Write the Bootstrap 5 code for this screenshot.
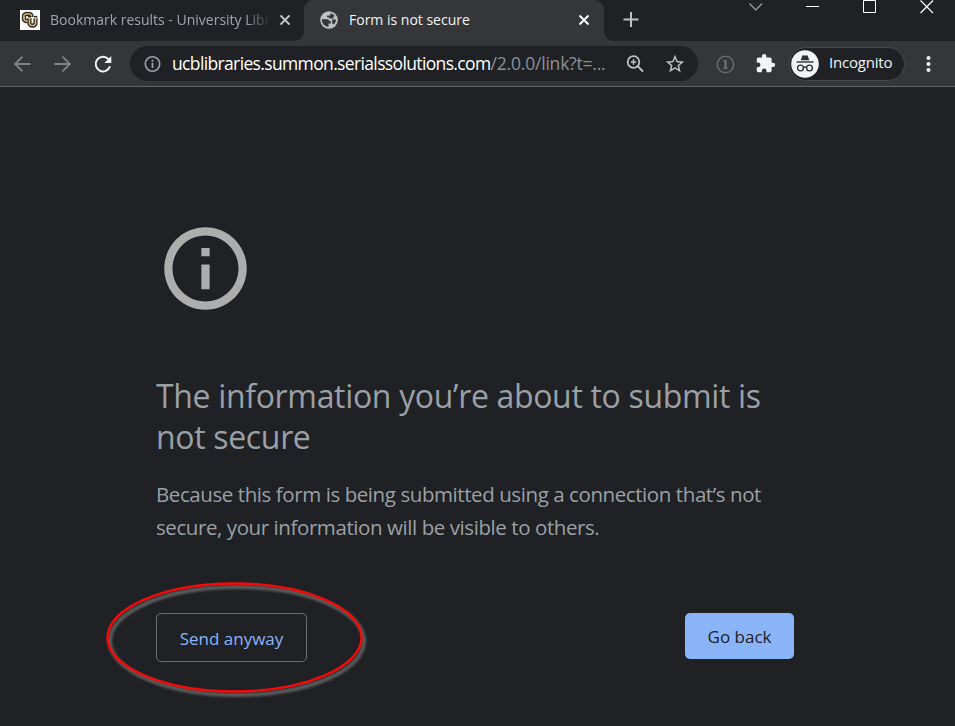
<!DOCTYPE html>
<html lang="en">
<head>
<meta charset="utf-8">
<meta name="viewport" content="width=device-width, initial-scale=1">
<title>Form is not secure</title>
<link href="https://cdn.jsdelivr.net/npm/bootstrap@5.3.0/dist/css/bootstrap.min.css" rel="stylesheet">
<style>
  body { background: #202124; color: #9aa0a6; font-family: "Open Sans", "Noto Sans", sans-serif; }
  svg { display: block; flex: none; }
  .tab-strip { height: 41px; background: #202124; }
  .tab-item { height: 41px; padding-bottom: 2px; font-size: 14px; line-height: 39px; white-space: nowrap; }
  .tab-idle { width: 304px; padding-left: 20px; color: #9fa5ab; }
  .tab-current { width: 300px; padding-left: 15px; background: #35363a; border-radius: 9px 9px 0 0; color: #f1f3f4; }
  .tab-current::before, .tab-current::after { content: ""; position: absolute; bottom: 0; width: 9px; height: 9px; }
  .tab-current::before { left: -9px; background: radial-gradient(circle at 0 0, #202124 8.5px, #35363a 9px); }
  .tab-current::after { right: -9px; background: radial-gradient(circle at 100% 0, #202124 8.5px, #35363a 9px); }
  .idle-title { width: 221px; margin-left: 10px; letter-spacing: 0; -webkit-mask-image: linear-gradient(90deg, #000 196px, transparent 221px); mask-image: linear-gradient(90deg, #000 196px, transparent 221px); }
  .current-title { width: 229px; margin-left: 10px; }
  .new-tab { margin: 9px 0 0 16px; }
  .window-controls { gap: 43px; padding-right: 21.5px; }
  .toolbar { height: 46px; background: #35363a; border-bottom: 1px solid #606164; padding-left: 13px; }
  .nav-icon { margin-left: 20px; }
  .address { width: 568px; height: 35px; background: #202124; margin-left: 17px; padding-left: 13px; }
  .url { width: 435px; margin-left: 11px; font-size: 17.5px; line-height: 35px; letter-spacing: -.2px; color: #8b9096; white-space: nowrap; }
  .url b { font-weight: 400; letter-spacing: -.64px; color: #fff; }
  .magnifier { margin-left: 18px; }
  .bookmark { margin-left: 19px; }
  .extensions { margin-left: 19px; }
  .incognito { width: 116px; height: 34px; margin-left: 13px; padding-left: 1px; background: #202124; border: 1px solid #45464a; color: #f1f3f4; font-size: 15px; }
  .incognito span { margin: -2px 0 0 10px; letter-spacing: -.2px; }
  .notice { width: 638px; margin-left: 156px; padding-top: 132px; }
  .notice-icon { margin-bottom: 57px; }
  .notice h1 { margin: 0; font-size: 32px; line-height: 41px; font-weight: 400; letter-spacing: -.33px; color: #9aa0a6; white-space: nowrap; }
  .notice p { margin: 21px 0 0; font-size: 20.5px; line-height: 33px; letter-spacing: -.42px; white-space: nowrap; }
  .actions { margin-top: 69px; }
  .btn-send { width: 151px; height: 49px; font-size: 17px; color: #8ab4f8; border: 1px solid #6b6d71; border-radius: 5px; padding: 2px 0 0; }
  .btn-back { width: 109px; height: 46px; font-size: 17px; color: #202124; background: #8ab4f8; border: 0; border-radius: 5px; padding: 1px 0 0; }
  .btn-send:hover, .btn-back:hover { background: #a3c3fa; color: #202124; }
  .marker { left: -51px; top: -32px; pointer-events: none; }
</style>
<script src="https://cdn.jsdelivr.net/npm/bootstrap@5.3.0/dist/js/bootstrap.bundle.min.js"></script>
</head>
<body class="min-vh-100">
<header>
  <div class="tab-strip d-flex">
    <div class="tab-item tab-idle d-flex align-items-center">
      <svg width="20" height="20" viewBox="0 0 20 20"><path fill="#fff" d="M0 0h20v20H0z"/><g fill="none" stroke-linejoin="round"><path id="cu-c" d="M11.500 7V5.500L10 4H5.500L4 5.500v4L5.500 11H8" stroke="#8a8578" stroke-width="4.600"/><path d="M9.500 8v6l1.500 1.500h3l1.500-1.500V8M8 8h3m3 0h3.500" stroke="#8a8578" stroke-width="4.400"/><path d="M11.500 7V5.500L10 4H5.500L4 5.500v4L5.500 11H8M9.500 8v6l1.500 1.500h3l1.500-1.500V8M8 8h3m3 0h3" stroke="#15130f" stroke-width="3.400"/><path d="M11.500 6.500v-1L10 4H5.500L4 5.500v4L5.500 11H8M9.500 8.500V14l1.500 1.500h3l1.500-1.500V8.500M8 8h3m3 0h3" stroke="#d3bd83" stroke-width="1.700"/></g></svg>
      <div class="idle-title">Bookmark results - University Libr</div>
      <svg class="ms-2" width="12" height="12" viewBox="0 0 12 12"><path d="M1.500 1.500l9 9m0-9l-9 9" stroke="#c3c5c9" stroke-width="1.800"/></svg>
    </div>
    <div class="tab-item tab-current position-relative d-flex align-items-center">
      <svg width="20" height="20" viewBox="0 0 20 20"><circle cx="10" cy="10" r="8.800" fill="#c0c1c3"/><path fill="#35363a" d="M2.800 9.200h5.600q1.600 0 1.800 1.800h1.600v2.400H9.600v3.400A7.100 7.100 0 0 1 2.800 9.200zM11.300 3.200q3 .5 4.700 3h-1.500v2.300h-4.300V7.200H8V5.400h3.300zM13 9.600h4a7 7 0 0 1-2 5l-1.600-.9z"/></svg>
      <div class="current-title">Form is not secure</div>
      <svg width="12" height="12" viewBox="0 0 12 12"><path d="M1.500 1.500l9 9m0-9l-9 9" stroke="#fff" stroke-width="1.900"/></svg>
    </div>
    <svg class="new-tab" width="22" height="22" viewBox="0 0 22 22"><path d="M11 3v15M3.500 10.500h15" stroke="#bdc1c6" stroke-width="2"/></svg>
    <div class="window-controls d-flex ms-auto">
      <svg width="14" height="14" viewBox="0 0 14 14"><path d="M.5 3.500l6.300 6.500 6.300-6.500" fill="none" stroke="#a2a3a5" stroke-width="1.200"/></svg>
      <svg width="14" height="14" viewBox="0 0 14 14"><path d="M0 6.500h13" stroke="#fff"/></svg>
      <svg width="14" height="14" viewBox="0 0 14 14"><path d="M.5.5h12v12H.5z" fill="none" stroke="#fff"/></svg>
      <svg width="14" height="14" viewBox="0 0 14 14"><path d="M.5.5l12.500 12.500M13 .5L.5 13" stroke="#fff" stroke-width="1.200"/></svg>
    </div>
  </div>
  <div class="toolbar d-flex align-items-center">
    <svg width="20" height="20" viewBox="0 0 20 20"><path d="M17.500 10H2.500m7-7.300L2.200 10l7.300 7.300" fill="none" stroke="#828386" stroke-width="1.900"/></svg>
    <svg class="nav-icon" width="20" height="20" viewBox="0 0 20 20"><path d="M1.500 10h15m-7-7.300l7.300 7.300-7.300 7.300" fill="none" stroke="#828386" stroke-width="1.900"/></svg>
    <svg class="nav-icon" width="20" height="20" viewBox="0 0 20 20"><path d="M17 12.300A7.300 7.300 0 1 1 15.300 5l2 2" fill="none" stroke="#f1f3f4" stroke-width="2"/><path d="M18.300 2v7h-7z" fill="#f1f3f4"/></svg>
    <div class="address rounded-pill d-flex align-items-center">
      <svg width="18" height="18" viewBox="0 0 18 18"><circle cx="9.500" cy="9" r="7.200" fill="none" stroke="#9aa0a6" stroke-width="1.600"/><path d="M9.500 7.800v5.200M9.500 4.800v1.900" stroke="#9aa0a6" stroke-width="1.800"/></svg>
      <div class="url"><b>ucblibraries.summon.serialssolutions.com</b>/2.0.0/link?t=...</div>
      <svg class="magnifier" width="20" height="20" viewBox="0 0 20 20"><g fill="none" stroke="#c0c2c5" stroke-width="1.800"><circle cx="8.500" cy="8" r="5.800"/><path d="M12.700 12.200l5.300 5.300"/><path d="M8.500 5.300v5.400M5.800 8h5.400" stroke-width="1.500"/></g></svg>
      <svg class="bookmark" width="22" height="22" viewBox="0 0 24 24"><path fill="#c0c2c5" d="M22 9.240l-7.190-.62L12 2 9.190 8.630 2 9.240l5.460 4.730L5.820 21 12 17.270 18.180 21l-1.630-7.030L22 9.240zM12 15.400l-3.760 2.270 1-4.280-3.320-2.880 4.380-.38L12 6.100l1.710 4.040 4.380.38-3.320 2.880 1 4.280L12 15.400z"/></svg>
    </div>
    <svg class="ms-3" width="22" height="22" viewBox="0 0 22 22"><circle cx="11.500" cy="11.500" r="8.200" fill="none" stroke="#6a6a6b" stroke-width="1.600"/><path d="M11.500 6.800v9.400" stroke="#6a6a6b" stroke-width="2.600"/><path d="M9.300 7.800h2m-2 7.400h4.400" stroke="#6a6a6b" stroke-width="1.200"/></svg>
    <svg class="extensions" width="21" height="21" viewBox="0 0 24 24"><path fill="#f1f3f4" d="M20.500 11H19V7a2 2 0 0 0-2-2h-4V3.500a2.500 2.500 0 0 0-5 0V5H4a2 2 0 0 0-2 2v3.800h1.500a2.700 2.700 0 0 1 0 5.400H2V20a2 2 0 0 0 2 2h3.800v-1.500a2.700 2.700 0 0 1 5.400 0V22H17a2 2 0 0 0 2-2v-4h1.500a2.500 2.500 0 0 0 0-5z"/></svg>
    <div class="incognito rounded-pill d-flex align-items-center">
      <svg width="28" height="28" viewBox="0 0 28 28"><circle cx="14" cy="14" r="13.800" fill="#f1f3f4"/><path d="M9.700 10.200l1.500-4.300q.3-.9 1.200-.6l1.600.4 1.600-.4q.9-.3 1.200.6l1.500 4.300z" fill="#303134"/><path d="M5.500 12h17" stroke="#303134" stroke-width="1.400"/><g fill="none" stroke="#303134" stroke-width="1.400"><circle cx="9.500" cy="18" r="2.900"/><circle cx="18.500" cy="18" r="2.900"/><path d="M12.400 17.500q1.600-.9 3.200 0"/></g></svg>
      <span>Incognito</span>
    </div>
    <svg class="ms-3" width="16" height="20" viewBox="0 0 16 20"><g fill="#f1f3f4"><circle cx="7.500" cy="4" r="2"/><circle cx="7.500" cy="10" r="2"/><circle cx="7.500" cy="16" r="2"/></g></svg>
  </div>
</header>
<main class="notice">
  <svg class="notice-icon" width="99" height="99" viewBox="0 0 24 24"><path fill="#adadad" d="M11 7h2v2h-2zm0 4h2v6h-2zm1-9C6.480 2 2 6.480 2 12s4.480 10 10 10 10-4.480 10-10S17.520 2 12 2zm0 18c-4.410 0-8-3.590-8-8s3.590-8 8-8 8 3.590 8 8-3.590 8-8 8z"/></svg>
  <h1>The information you’re about to submit is<br>not secure</h1>
  <p>Because this form is being submitted using a connection that’s not<br>secure, your information will be visible to others.</p>
  <div class="actions d-flex justify-content-between align-items-start">
    <div class="position-relative">
      <button type="button" class="btn btn-send">Send anyway</button>
      <svg class="marker position-absolute" width="266" height="120" viewBox="0 0 266 120">
        <defs><filter id="soft" x="-5%" y="-10%" width="110%" height="120%"><feGaussianBlur stdDeviation="1"/></filter></defs>
        <ellipse cx="132" cy="60" rx="127" ry="54" fill="none" stroke="#5c5c5c" stroke-width="4" filter="url(#soft)"/>
        <ellipse cx="129.500" cy="56.500" rx="127" ry="54" fill="none" stroke="#f80808" stroke-width="2.400"/>
      </svg>
    </div>
    <button type="button" class="btn btn-back">Go back</button>
  </div>
</main>
</body>
</html>
